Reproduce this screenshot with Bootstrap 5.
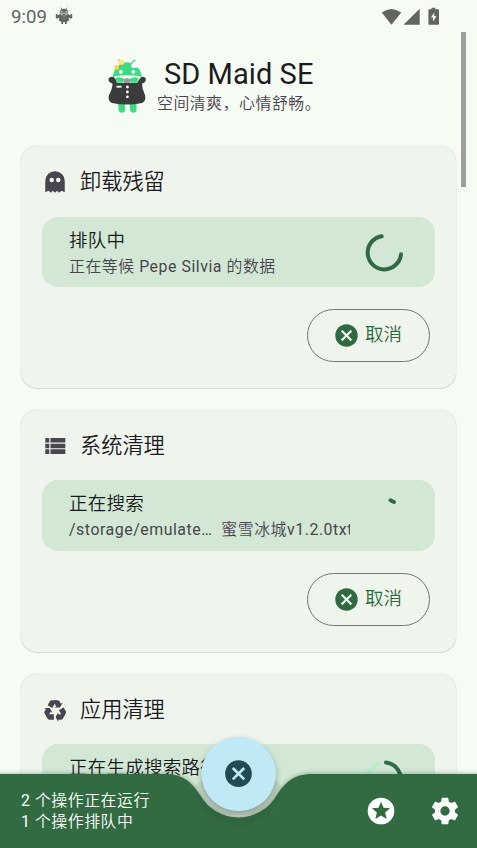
<!DOCTYPE html>
<html lang="zh-CN">
<head>
<meta charset="utf-8">
<meta name="viewport" content="width=device-width, initial-scale=1">
<title>SD Maid SE</title>
<link href="https://cdn.jsdelivr.net/npm/bootstrap@5.3.0/dist/css/bootstrap.min.css" rel="stylesheet">
<style>
body{background:#f6fbf4;color:#1b1b1f;font-family:Roboto,"Noto Sans CJK SC DemiLight","Noto Sans CJK SC Light","Noto Sans CJK SC",sans-serif;height:848px;overflow:hidden}
svg{display:block;flex:none}
.screen{height:848px}
.status{height:32px;padding:1px 36px 0 11px;color:#62665f;font-size:18.6px}
.clock{padding-top:2px}
.status-gap{margin-left:8px;margin-bottom:1px}
.brand{height:114px;padding:22px 0 0 107px}
.brand-text{margin:3px 0 0 10px;width:170px}
.brand-name{font-size:29px;line-height:34px;padding-left:7px;letter-spacing:.06px}
.brand .fine{margin-top:2px}
.fine{font-size:15.9px;letter-spacing:.53px;line-height:21px;color:#49454f}
.tools{padding:0 21px;gap:21.5px}
.tool{height:242.3px;background:#eff4ed;border-radius:16px;box-shadow:0 0 1.5px rgba(0,0,0,.2),0 1px 1px rgba(0,0,0,.1);padding:22px 21px 0;flex:none}
.tool-title{font-size:21.2px;line-height:28px;height:28px;color:#1b1b1f}
.tool-title svg{margin-right:12px}
.state{margin-top:20.7px;height:70.6px;border-radius:16px;background:#d2e8d4;padding:11px 30px 0 27px}
.state-text{width:281px}
.state-name{font-size:18.55px;line-height:27px;letter-spacing:.2px}
.state .fine{margin-top:1px}
.clip{overflow:hidden}
.pill{height:53px;width:123px;margin:21.5px 5.5px 0 0;border:1.3px solid #72796f;border-radius:27px;color:#306a42;font-size:18.55px;line-height:24px;padding:0}
.pill-text{margin-left:5px;margin-right:1px}
.bottom{height:111px;left:0;bottom:0}
.bottom-items{height:74px;left:0;bottom:0;padding:0 16px 0 21px}
.bottom-items .fine{color:#fff}
.gear{margin-left:31.8px}
.fab{width:74px;height:74px;left:201.5px;top:737px;background:#bfe9f5;box-shadow:0 3px 7px rgba(0,0,0,.28)}
.thumb{width:5.3px;height:155.3px;left:461px;top:32px;background:#9e9e9e}
</style>
<script src="https://cdn.jsdelivr.net/npm/bootstrap@5.3.0/dist/js/bootstrap.bundle.min.js"></script>
</head>
<body>
<svg width="0" height="0" class="position-absolute">
<symbol id="cancel" viewBox="0 0 24 24"><path d="M12 2C17.53 2 22 6.47 22 12S17.53 22 12 22 2 17.53 2 12 6.47 2 12 2M15.59 7L12 10.59 8.41 7 7 8.41 10.59 12 7 15.59 8.41 17 12 13.41 15.59 17 17 15.59 13.41 12 17 8.41Z"/></symbol>
</svg>
<div class="screen position-relative overflow-hidden">
<header class="status d-flex align-items-center">
<span class="clock">9:09</span>
<svg class="status-gap" width="18" height="18" viewBox="0 0 18 18" fill="#62665f"><path d="M4.7 5.7C4.8 4 5.5 2.9 6.6 2.3L5.5.8 6 .4 7.2 2Q9 1.4 10.8 2L12 .4 12.5.8 11.4 2.3Q13.2 3.4 13.3 5.7ZM4.7 6.4H13.3L13.1 7.2 15.3 8.2 15.7 6.9 17.3 7.4 17 9.4 17.6 10 16.5 11.7 13.5 10.5 14.4 13.3 11.7 14.7V17H9.9V14.9H8.1V17H6.3V14.7L3.6 13.3 4.5 10.5 1.5 11.7.4 10 1 9.4.7 7.4 2.3 6.9 2.7 8.2 4.9 7.2Z"/><path d="M6.3 4h1.1v1H6.3zM10.6 4h1.1v1h-1.1zM6 7.2l2.3.7-.2.5L6 8zM12 7.2l-2.3.7.2.5L12 8zM8.7 9h.6v.8h-.6zM8.7 11h.6v.8h-.6z" fill="#f6fbf4"/></svg>
<svg class="ms-auto" width="60" height="20" viewBox="0 0 60 20" fill="#62665f"><path d="M2 4.5Q11.3-2.500 21.500 4.500L11.600 16.700ZM23.600 16.800 39.900.8V16.800ZM51.700.5V-.2H55.500V1.200H58.300Q59.200 1.200 59.200 2V16Q59.200 16.800 58.400 16.800H49.400Q48.600 16.800 48.600 16V2Q48.600 1.200 49.400 1.200H51.700Z" transform="translate(-1.200 1)"/><path d="M53.200 5.500 50 10.500H52V14.500L55.500 9.200H53.200Z" fill="#fff"/></svg>
</header>

<section class="brand d-flex">
<svg width="40" height="62" viewBox="107 54 40 62">
<path d="M118 103h7v6.500a3.200 3.200 0 0 1-6.400 0zM129.500 103h7v6.500a3.200 3.200 0 0 1-6.400 0z" fill="#3ddc84"/>
<path d="M112.500 78C113 71 117 66 121 64L118 60 119.500 59 123 63Q127 61.500 131 63L134 59.500 136 60.500 133.500 64Q141 68 142 78Z" fill="#3ddc84"/>
<path d="M118.500 59.500 123.500 60.500 123.700 65 119 64.500ZM114.500 65 119 65.500 118.500 70 114.300 69Z" fill="#ffd54f"/>
<circle cx="121.500" cy="62" r="2.300" fill="#ffe58a"/>
<path d="M131 65 134 61.500 138 61 139 64 137 67.500 132 68Z" fill="#fff"/><circle cx="137.500" cy="61.800" r="2" fill="#fff"/>
<circle cx="120.800" cy="71.800" r="1.900" fill="#fff"/><circle cx="133.300" cy="71.800" r="1.900" fill="#fff"/>
<path d="M114 76.500Q127 74 140.500 76.500V83H114Z" fill="#f5fbf4"/>
<path d="M108.500 78.500Q112 75 115.500 79L117 83H137L139.500 79Q143 75 145.800 78.500 146 83 142 83.500 142 89 145 95 146.500 101 142 103 127 106 112 103 107.500 101 109 95 112.500 89 112.500 83.500 108 82.500 108.500 78.500Z" fill="#3b3b3d"/>
<path d="M115.500 77.800Q121 76.500 124.500 79L123 82.700H117ZM129.500 79Q134 76.500 138.500 77.800L137 82.700H130.500Z" fill="#3ddc84"/>
<path d="M123.500 79.500 127 78 130.500 79.500 129.500 83H124Z" fill="#999"/>
<path d="M116.500 85.800h5v1.800h-5z" fill="#fff"/><circle cx="127.400" cy="87" r="1.400" fill="#fff"/><circle cx="127.400" cy="92" r="1.400" fill="#fff"/><circle cx="127.400" cy="96.800" r="1.400" fill="#fff"/>
</svg>
<div class="brand-text">
<div class="brand-name text-nowrap">SD Maid SE</div>
<div class="fine text-nowrap">空间清爽，心情舒畅。</div>
</div>
</section>

<main class="tools d-flex flex-column">
<article class="tool">
<div class="tool-title d-flex align-items-center"><svg width="26" height="26" viewBox="0 0 24 24" fill="#49454f"><path fill-rule="evenodd" d="M12 2A9 9 0 0 0 3 11V21.500L6 20 8.200 22 10 20 12 22 14 20 15.800 22 18 20 21 21.500V11A9 9 0 0 0 12 2M9 8A2.100 2.100 0 1 1 9 12.200 2.100 2.100 0 0 1 9 8M15 8A2.100 2.100 0 1 1 15 12.200 2.100 2.100 0 0 1 15 8Z"/></svg>卸载残留</div>
<div class="state d-flex justify-content-between"><div class="state-text"><div class="state-name">排队中</div><div class="fine text-nowrap">正在等候 Pepe Silvia 的数据</div></div>
<svg width="42" height="50" viewBox="363 227.700 42 50" fill="none" stroke="#306a42" stroke-width="4" stroke-linecap="round"><path d="M381.700 235.900A16.700 16.700 0 1 0 401 254"/></svg></div>
<button class="pill btn d-flex align-items-center justify-content-center ms-auto"><svg width="27" height="27" fill="currentColor"><use href="#cancel"/></svg><span class="pill-text">取消</span></button>
</article>

<article class="tool">
<div class="tool-title d-flex align-items-center"><svg width="26" height="26" viewBox="0 0 26 26" fill="#49454f"><path d="M3.300 5h4v4.600h-4zM8.500 5H23.300v4.600H8.500zM3.300 10.700h4v4.500h-4zM8.500 10.700H23.300v4.500H8.500zM3.300 16.300h4V21h-4zM8.500 16.300H23.300V21H8.500z"/></svg>系统清理</div>
<div class="state d-flex justify-content-between"><div class="state-text"><div class="state-name">正在搜索</div><div class="fine text-nowrap clip">/storage/emulate…&nbsp; 蜜雪冰城v1.2.0txt</div></div>
<svg width="42" height="50" viewBox="363 491.700 42 50" fill="none" stroke="#306a42" stroke-width="4" stroke-linecap="round"><path d="M390.500 501 394 502.700"/></svg></div>
<button class="pill btn d-flex align-items-center justify-content-center ms-auto"><svg width="27" height="27" fill="currentColor"><use href="#cancel"/></svg><span class="pill-text">取消</span></button>
</article>

<article class="tool">
<div class="tool-title d-flex align-items-center"><svg width="26" height="26" viewBox="0 0 24 24" fill="#49454f"><path d="M21.820 15.420L19.320 19.750C18.830 20.610 17.920 21.060 17 21H15V23L12.500 18.500 15 14V16H17.820L15.600 12.150 19.930 9.650 21.730 12.770C22.250 13.540 22.320 14.570 21.820 15.420M9.210 3.060H14.210C15.190 3.060 16.040 3.630 16.450 4.450L17.450 6.190 19.180 5.190 16.540 9.600 11.390 9.690 13.120 8.690 11.710 6.240 9.500 10.090 5.160 7.590 6.960 4.470C7.370 3.640 8.220 3.060 9.210 3.060M5.050 19.760L2.550 15.430C2.060 14.580 2.130 13.560 2.640 12.790L3.640 11.060 1.910 10.060 7.050 10.140 9.700 14.560 7.970 13.560 6.560 16H11V21H7.400C6.470 21.070 5.550 20.610 5.050 19.760Z"/></svg>应用清理</div>
<div class="state d-flex justify-content-between"><div class="state-text"><div class="state-name">正在生成搜索路径</div></div>
<svg width="42" height="50" viewBox="363 755.700 42 50" fill="none" stroke-width="4"><path d="M379 764.500A16.700 16.700 0 0 0 368 785" stroke="#b3f1c2"/><path d="M386 763.200A16.700 16.700 0 0 1 400 785" stroke="#306a42" stroke-linecap="round"/></svg></div>
</article>
</main>

<div class="thumb position-absolute"></div>
<div class="fab position-absolute rounded-circle"></div>
<svg class="bottom position-absolute" width="477" height="111" viewBox="0 737 477 111"><defs><filter id="lift" x="-5%" y="-20%" width="110%" height="140%"><feDropShadow dx="0" dy="0" stdDeviation="2.500" flood-opacity=".35"/></filter>
<radialGradient id="shade" gradientUnits="userSpaceOnUse" cx="238.500" cy="774" r="44"><stop offset=".8" stop-opacity=".1"/><stop offset="1" stop-opacity=".04"/></radialGradient></defs>
<path filter="url(#lift)" fill="#306a42" d="M-10 774H165C184 774 192 783 200.500 795.500A43.800 43.800 0 0 0 276.500 795.500C285 783 293 774 312 774H487V860H-10Z"/>
<path fill="url(#shade)" d="M195 787A43.800 43.800 0 0 0 282 787L276 780H201Z"/>
<circle cx="238.500" cy="774" r="37" fill="#bfe9f5"/>
<use href="#cancel" x="222.500" y="757.700" width="32" height="32" fill="#1f4b56"/></svg>
<nav class="bottom-items position-absolute w-100 d-flex align-items-center"><div class="fine text-nowrap">2 个操作正在运行<br>1 个操作排队中</div>
<svg class="ms-auto" width="32" height="32" viewBox="0 0 24 24" fill="#fff"><path fill-rule="evenodd" d="M12 2A10 10 0 1 0 12 22 10 10 0 0 0 12 2M16.240 18 12 15.450 7.770 18 8.890 13.190 5.160 9.960 10.080 9.540 12 5 13.920 9.530 18.840 9.950 15.110 13.180Z"/></svg>
<svg class="gear" width="32" height="32" viewBox="0 0 24 24" fill="#fff"><path d="M12 15.500A3.500 3.500 0 0 1 8.500 12 3.500 3.500 0 0 1 12 8.500 3.500 3.500 0 0 1 15.500 12 3.500 3.500 0 0 1 12 15.500M19.430 12.970C19.470 12.650 19.500 12.330 19.500 12S19.470 11.340 19.430 11L21.540 9.370C21.730 9.220 21.780 8.950 21.660 8.730L19.660 5.270C19.540 5.050 19.270 4.960 19.050 5.050L16.560 6.050C16.040 5.660 15.500 5.320 14.870 5.070L14.500 2.420C14.460 2.180 14.250 2 14 2H10C9.750 2 9.540 2.180 9.500 2.420L9.130 5.070C8.500 5.320 7.960 5.660 7.440 6.050L4.950 5.050C4.730 4.960 4.460 5.050 4.340 5.270L2.340 8.730C2.210 8.950 2.270 9.220 2.460 9.370L4.570 11C4.530 11.340 4.500 11.670 4.500 12S4.530 12.650 4.570 12.970L2.460 14.630C2.270 14.780 2.210 15.050 2.340 15.270L4.340 18.730C4.460 18.950 4.730 19.030 4.950 18.950L7.440 17.940C7.960 18.340 8.500 18.680 9.130 18.930L9.500 21.580C9.540 21.820 9.750 22 10 22H14C14.250 22 14.460 21.820 14.500 21.580L14.870 18.930C15.500 18.670 16.040 18.340 16.560 17.940L19.050 18.950C19.270 19.030 19.540 18.950 19.660 18.730L21.660 15.270C21.780 15.050 21.730 14.780 21.540 14.630L19.430 12.970Z"/></svg></nav>
</div>
</body>
</html>
